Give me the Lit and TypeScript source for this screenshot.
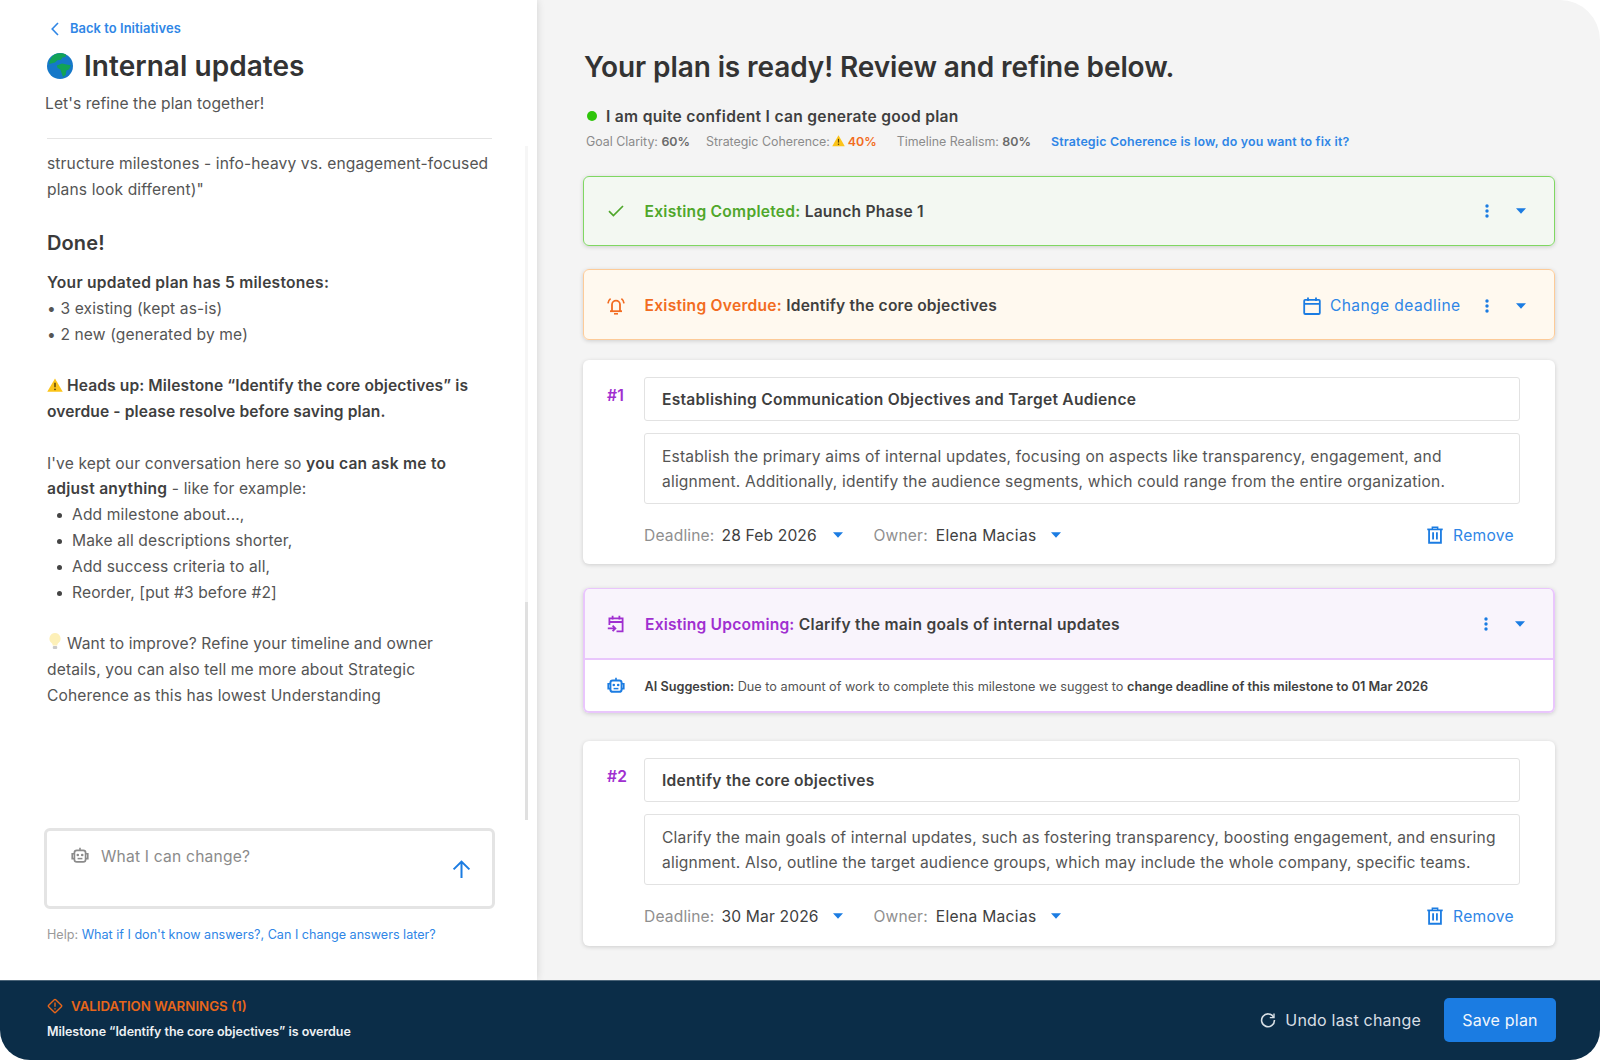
import { LitElement, html, css } from "lit";
import { customElement } from "lit/decorators.js";

const robot = (c: string, s = 18, w = 1.7) => html`<svg width=${s} height=${s} viewBox="0 0 18 18" fill="none"><path d="M9 .8v2.6" stroke=${c} stroke-width="1.6"/><rect x="3.4" y="3.4" width="11.2" height="11.4" rx="2.4" stroke=${c} stroke-width=${w}/><path d="M3.2 6.8H1.2v4.8h2M14.8 6.8h2v4.8h-2" stroke=${c} stroke-width="1.6"/><circle cx="6.8" cy="8" r="1.3" fill=${c}/><circle cx="11.2" cy="8" r="1.3" fill=${c}/><path d="M6.6 11.6h4.8" stroke=${c} stroke-width="1.5"/></svg>`;
const kebab = html`<svg class="kebab" width="4" height="14" viewBox="0 0 4 14"><circle cx="2" cy="2" r="1.7" fill="#1b7ce2"/><circle cx="2" cy="7" r="1.7" fill="#1b7ce2"/><circle cx="2" cy="12" r="1.7" fill="#1b7ce2"/></svg>`;
const caret = html`<svg class="caret" width="10" height="6" viewBox="0 0 10 6"><path d="M0 .3h10L5 5.7z" fill="#1b7ce2"/></svg>`;
const trash = html`<svg width="18" height="18" viewBox="0 0 17 17" fill="none" stroke="#1b7ce2"><path d="M1.2 3.2h14.6" stroke-width="1.6"/><path d="M6 3V1.1h5V3" stroke-width="1.4"/><path d="M2.9 3.2v12.6h11.2V3.2" stroke-width="1.7"/><path d="M6.7 6v6.8M10.3 6v6.8" stroke-width="1.7"/></svg>`;
const warn = (s = 15) => html`<svg width=${s} height=${s * 0.87} viewBox="0 0 16 14"><path d="M8 .4 15.8 13.8H.2z" fill="#fcc419"/><path d="M8 4.8v4.6" stroke="#5b4306" stroke-width="1.5"/><circle cx="8" cy="11.4" r=".95" fill="#5b4306"/></svg>`;

@customElement("app-root")
export class AppRoot extends LitElement {
  static styles = css`
    :host { display: block; width: 1600px; height: 1060px; background: #fff; font-family: "Inter", "Open Sans", sans-serif; color: #555; font-size: 15.6px; letter-spacing: .06px; }
    * { box-sizing: border-box; }
    b { font-weight: 600; color: #3f3f3f; letter-spacing: .26px; }
    .frame { width: 1600px; height: 1060px; display: flex; flex-direction: column; border-radius: 0 40px 30px 30px; overflow: hidden; }
    .main { flex: 1; min-height: 0; display: flex; }

    .left { width: 537px; flex: none; position: relative; z-index: 1; background: #fff; box-shadow: 0 0 8px rgba(0,0,0,.14); display: flex; flex-direction: column; padding: 20px 45px 0 47px; }
    .back { display: flex; align-items: center; color: #2f86e6; font-size: 12.9px; font-weight: 600; height: 17px; }
    .back svg { margin: 0 11px 0 4px; }
    .title { display: flex; align-items: center; margin-top: 9px; height: 40px; }
    .title span { font-size: 28px; font-weight: 600; color: #333; margin-left: 11px; letter-spacing: .05px; }
    .sub { margin: 6px 0 0 -2px; height: 24px; line-height: 24px; }
    .divider { height: 1px; background: #e4e4e4; margin-top: 22px; }
    .chat { flex: 1; min-height: 0; padding-top: 12px; line-height: 25.8px; letter-spacing: .12px; }
    .chat p { margin: 0; }
    .chat .gap { margin-top: 25.8px; }
    .chat h3 { margin: 26px 0 0; font-size: 20px; line-height: 28px; font-weight: 600; color: #3a3a3a; }
    .chat .lead { margin-top: 13.5px; }
    .chat .heads b { letter-spacing: .1px; }
    .chat ul { margin: 0; padding: 0 0 0 25px; list-style: none; }
    .chat li { position: relative; }
    .chat li::before { content: ""; position: absolute; left: -15px; top: 11px; width: 5px; height: 5px; border-radius: 50%; background: #444; }
    .chat svg { vertical-align: -1px; margin-right: 4px; }
    .track { position: absolute; left: 525px; top: 146px; width: 3px; height: 674px; background: #f6f6f6; }
    .thumb { position: absolute; left: 0; top: 456px; width: 3px; height: 218px; background: #e0e0e0; }
    .input { margin-left: -3px; width: 451px; height: 81px; border: 3px solid #e4e4e4; border-radius: 6px; display: flex; justify-content: space-between; padding: 0 21px 0 24px; }
    .input .ph { display: flex; align-items: center; height: 50px; gap: 12px; color: #8b8b8b; letter-spacing: .2px; }
    .input .send { margin-top: 29px; }
    .help { margin: 17px 0 36px; font-size: 12.6px; line-height: 18px; color: #9a9a9a; letter-spacing: 0; }
    .help a { color: #2f86e6; }

    .right { flex: 1; min-width: 0; background: #f4f4f4; padding: 49px 45px 0 46px; display: flex; flex-direction: column; }
    h1 { margin: 0 0 0 1px; font-size: 28px; line-height: 36px; font-weight: 600; color: #333; letter-spacing: -.1px; }
    .status { display: flex; align-items: center; margin: 19px 0 0 3px; height: 24px; font-weight: 600; color: #3f3f3f; letter-spacing: .3px; }
    .status i { width: 10px; height: 10px; border-radius: 50%; background: #2ec50a; margin: 0 9px 0 1px; }
    .metrics { display: flex; align-items: center; margin: 3px 0 0 3px; height: 20px; font-size: 12.4px; color: #8b8b8b; letter-spacing: 0; }
    .metrics b { color: #6a6a6a; letter-spacing: 0; }
    .metrics > span { margin-right: 20px; }
    .metrics > span.first { margin-right: 16px; }
    .metrics svg { margin: 0 3px 0 2px; vertical-align: -1px; }
    .metrics .low { color: #f26c21; }
    .metrics a { color: #2f86e6; font-weight: 600; letter-spacing: .17px; }

    .card { border-radius: 6px; box-shadow: 0 1px 4px rgba(0,0,0,.16); background: #fff; flex: none; }
    .m25 { margin-top: 25px; }
    .m24 { margin-top: 24px; }
    .m23 { margin-top: 23px; }
    .m20 { margin-top: 20px; }
    .m28 { margin-top: 28px; }
    .head { height: 70px; display: flex; align-items: center; padding: 0 28.5px 0 22.5px; border: 1.5px solid; border-radius: 6px; }
    .head .ico { width: 18px; height: 18px; display: flex; align-items: center; justify-content: center; margin-right: 20px; flex: none; }
    .head .label { flex: 1; font-weight: 600; color: #3f3f3f; letter-spacing: .2px; }
    .head .change { display: flex; align-items: center; gap: 9px; color: #2f86e6; margin-right: 24px; font-weight: 400; letter-spacing: .4px; }
    .kebab { margin-right: 27px; }
    .green { background: #f3f8f2; border-color: #7fd762; }
    .green .t { color: #4fa72b; }
    .orange { background: #fff9ef; border-color: #fdcb98; height: 71px; padding-top: 2px; }
    .orange .t { color: #f26c21; }
    .purple { background: #f9f4fc; border-color: #e9c6fc; border-bottom-left-radius: 0; border-bottom-right-radius: 0; height: 72px; border-width: 1.5px 2px 2px; padding: 1px 28px 0 22px; }
    .purple .t { color: #a02fd0; }
    .purple .label { letter-spacing: .28px; }
    .purple .label b { letter-spacing: .2px; }
    .ai { height: 53px; border: 2px solid #e9c6fc; border-top: 0; border-radius: 0 0 6px 6px; display: flex; align-items: center; padding: 1px 0 0 22px; font-size: 12.7px; color: #555; letter-spacing: 0; }
    .ai b { letter-spacing: 0; }
    .ai .ico { width: 18px; height: 18px; margin-right: 19.5px; display: flex; }
    .ms { padding: 17px 35px 0 24px; height: 204px; display: grid; grid-template-columns: 37px 1fr; align-content: start; }
    .ms.tall { height: 205px; }
    .num { color: #a02fd0; font-weight: 600; line-height: 18px; padding-top: 10px; letter-spacing: .3px; }
    .field { height: 44px; border: 1px solid #e2e2e2; border-radius: 3px; display: flex; align-items: center; padding: 0 17px; font-weight: 600; color: #3f3f3f; letter-spacing: .26px; }
    .area { grid-column: 2; margin-top: 12px; height: 71px; border: 1px solid #e2e2e2; border-radius: 3px; padding: 9.5px 17px; line-height: 25.6px; letter-spacing: .18px; }
    .meta { grid-column: 2; margin-top: 20px; display: flex; align-items: center; height: 22px; color: #8f8f8f; letter-spacing: .15px; }
    .meta .v { color: #3f3f3f; margin-left: 7px; }
    .meta .d { width: 111px; }
    .meta .o { width: 115px; margin-left: 8px; letter-spacing: .3px; }
    .meta .caret { margin: 0 31px 0 0; }
    .meta .remove { margin-left: auto; margin-right: 6px; display: flex; align-items: center; gap: 9px; color: #2f86e6; letter-spacing: .3px; }

    .bar { height: 80px; flex: none; position: relative; z-index: 2; background: #0b2d48; border-top: 1px solid #4b6478; display: flex; align-items: center; padding: 0 44px 0 47px; }
    .warn { flex: 1; margin-top: -3px; }
    .warn .w1 { display: flex; align-items: center; gap: 8px; color: #e8661a; font-size: 13.3px; font-weight: 600; line-height: 20px; letter-spacing: 0; }
    .warn .w2 { margin-top: 6px; color: #eef1f4; font-size: 12.5px; font-weight: 600; line-height: 20px; letter-spacing: -.03px; }
    .undo { display: flex; align-items: center; gap: 9px; color: #d8dfe5; margin: -2px 23px 0 0; font-size: 16px; letter-spacing: .2px; }
    .save { width: 112px; height: 44px; margin-top: -2px; background: #1b7ce2; color: #f1f6fc; border-radius: 5px; display: flex; align-items: center; justify-content: center; font-size: 16px; letter-spacing: .2px; }
  `;

  render() {
    return html`<div class="frame">
      <div class="main">
        <aside class="left">
          <div class="back"><svg width="8" height="14" viewBox="0 0 8 14" fill="none"><path d="M7 1 1.2 7 7 13" stroke="#2f86e6" stroke-width="1.6"/></svg>Back to Initiatives</div>
          <div class="title">
            <svg width="26" height="26" viewBox="0 0 26 26"><circle cx="13" cy="13" r="13" fill="#1578c8"/><path d="M8 1.2C11.5-.2 16-.2 19 1.6l-.6 2.4-3 .6-1.4 2.2-3.6.4L8 9.4 2.2 11C2.4 7 4.4 3.2 8 1.2z" fill="#12a356"/><path d="M9.8 12.4l5.2-2 4.4 1 4.4.8-1.6 4-2.8 1.2-.8 4.6-2.6 2-1.6-4.6-1-3-2.8-1.4z" fill="#12a356"/></svg>
            <span>Internal updates</span>
          </div>
          <div class="sub">Let's refine the plan together!</div>
          <div class="divider"></div>
          <div class="chat">
            <p>structure milestones - info-heavy vs. engagement-focused<br>plans look different)"</p>
            <h3>Done!</h3>
            <p class="lead"><b>Your updated plan has 5 milestones:</b><br>• 3 existing (kept as-is)<br>• 2 new (generated by me)</p>
            <p class="gap heads">${warn(16)}<b>Heads up: Milestone “Identify the core objectives” is<br>overdue - please resolve before saving plan.</b></p>
            <p class="gap">I've kept our conversation here so <b>you can ask me to<br>adjust anything</b> - like for example:</p>
            <ul>
              <li>Add milestone about...,</li>
              <li>Make all descriptions shorter,</li>
              <li>Add success criteria to all,</li>
              <li>Reorder, [put #3 before #2]</li>
            </ul>
            <p class="gap"><svg width="16" height="18" viewBox="0 0 16 18"><path d="M8 1a5.6 5.6 0 0 0-3.4 10c.8.7 1 1.4 1.1 2.4h4.6c.1-1 .3-1.7 1.1-2.4A5.6 5.6 0 0 0 8 1z" fill="#fdf0b8"/><rect x="5.8" y="14" width="4.4" height="3" rx="1" fill="#c9c9c9"/></svg>Want to improve? Refine your timeline and owner<br>details, you can also tell me more about Strategic<br>Coherence as this has lowest Understanding</p>
          </div>
          <div class="track"><div class="thumb"></div></div>
          <div class="input">
            <div class="ph">${robot("#8b8b8b", 18)}<span>What I can change?</span></div>
            <svg class="send" width="19" height="19" viewBox="0 0 19 19" fill="none"><path d="M9.5 18V1.8M1.6 9.4l7.9-7.8 7.9 7.8" stroke="#1b7ce2" stroke-width="2"/></svg>
          </div>
          <div class="help">Help: <a>What if I don't know answers?, Can I change answers later?</a></div>
        </aside>
        <main class="right">
          <h1>Your plan is ready! Review and refine below.</h1>
          <div class="status"><i></i>I am quite confident I can generate good plan</div>
          <div class="metrics">
            <span class="first">Goal Clarity: <b>60%</b></span>
            <span>Strategic Coherence:${warn(13)}<b class="low">40%</b></span>
            <span>Timeline Realism: <b>80%</b></span>
            <a>Strategic Coherence is low, do you want to fix it?</a>
          </div>

          <section class="card m25">
            <div class="head green">
              <div class="ico"><svg width="16" height="12" viewBox="0 0 16 12" fill="none"><path d="M1 6.2 5.4 10.6 15 1" stroke="#4fa72b" stroke-width="1.7"/></svg></div>
              <div class="label"><b class="t">Existing Completed:</b> Launch Phase 1</div>
              ${kebab}${caret}
            </div>
          </section>

          <section class="card m23">
            <div class="head orange">
              <div class="ico"><svg width="18" height="18" viewBox="0 0 18 18" fill="none" stroke="#f26c21"><path d="M5 14V7.6a4 4 0 0 1 8 0V14" stroke-width="1.8"/><path d="M3 14.2h12" stroke-width="1.8"/><path d="M7 16.8h4" stroke-width="1.6"/><path d="M1 6.4A6.6 6.6 0 0 1 3.6 1.6M17 6.4a6.6 6.6 0 0 0-2.6-4.8" stroke-width="1.7"/></svg></div>
              <div class="label"><b class="t">Existing Overdue:</b> Identify the core objectives</div>
              <div class="change"><svg width="18" height="18" viewBox="0 0 18 18" fill="none" stroke="#1b7ce2" stroke-width="1.8"><rect x="1.2" y="2.8" width="15.6" height="14.2" rx="1"/><path d="M1.2 6.8h15.6M5 .4v3.6M13 .4v3.6"/></svg>Change deadline</div>
              ${kebab}${caret}
            </div>
          </section>

          <section class="card ms m20">
            <div class="num">#1</div>
            <div class="field">Establishing Communication Objectives and Target Audience</div>
            <div class="area">Establish the primary aims of internal updates, focusing on aspects like transparency, engagement, and<br>alignment. Additionally, identify the audience segments, which could range from the entire organization.</div>
            <div class="meta">Deadline:<span class="v d">28 Feb 2026</span>${caret}Owner:<span class="v o">Elena Macias</span>${caret}<div class="remove">${trash}Remove</div></div>
          </section>

          <section class="card m24">
            <div class="head purple">
              <div class="ico"><svg width="18" height="18" viewBox="0 0 18 18" fill="none" stroke="#a02fd0" stroke-width="1.8"><path d="M9.5 16.4h6.1V3.4H2.4V10"/><path d="M2.4 7h13.2M5.6 .8v3.8M12.4 .8v3.8"/><path d="M.8 13.4h7.4M5.6 10.6l2.8 2.8-2.8 2.8" /></svg></div>
              <div class="label"><b class="t">Existing Upcoming:</b> Clarify the main goals of internal updates</div>
              ${kebab}${caret}
            </div>
            <div class="ai"><div class="ico">${robot("#1b7ce2", 18, 2)}</div><span><b>AI Suggestion:</b> Due to amount of work to complete this milestone we suggest to <b>change deadline of this milestone to 01 Mar 2026</b></span></div>
          </section>

          <section class="card ms tall m28">
            <div class="num">#2</div>
            <div class="field">Identify the core objectives</div>
            <div class="area">Clarify the main goals of internal updates, such as fostering transparency, boosting engagement, and ensuring<br>alignment. Also, outline the target audience groups, which may include the whole company, specific teams.</div>
            <div class="meta">Deadline:<span class="v d">30 Mar 2026</span>${caret}Owner:<span class="v o">Elena Macias</span>${caret}<div class="remove">${trash}Remove</div></div>
          </section>
        </main>
      </div>
      <footer class="bar">
        <div class="warn">
          <div class="w1"><svg width="16" height="16" viewBox="0 0 16 16" fill="none" stroke="#e8661a" stroke-width="1.4"><rect x="3" y="3" width="10" height="10" rx="1" transform="rotate(45 8 8)"/><path d="M8 4.6v4.2"/><path d="M8 10.2v1.2"/></svg>VALIDATION WARNINGS (1)</div>
          <div class="w2">Milestone “Identify the core objectives” is overdue</div>
        </div>
        <div class="undo"><svg width="16" height="16" viewBox="0 0 16 16" fill="none" stroke="#d8dfe5" stroke-width="1.6"><path d="M13.6 5.2A6.4 6.4 0 1 0 14.4 8"/><path d="M14 1.4v4.2H9.8" stroke-width="1.4"/></svg>Undo last change</div>
        <div class="save">Save plan</div>
      </footer>
    </div>`;
  }
}
